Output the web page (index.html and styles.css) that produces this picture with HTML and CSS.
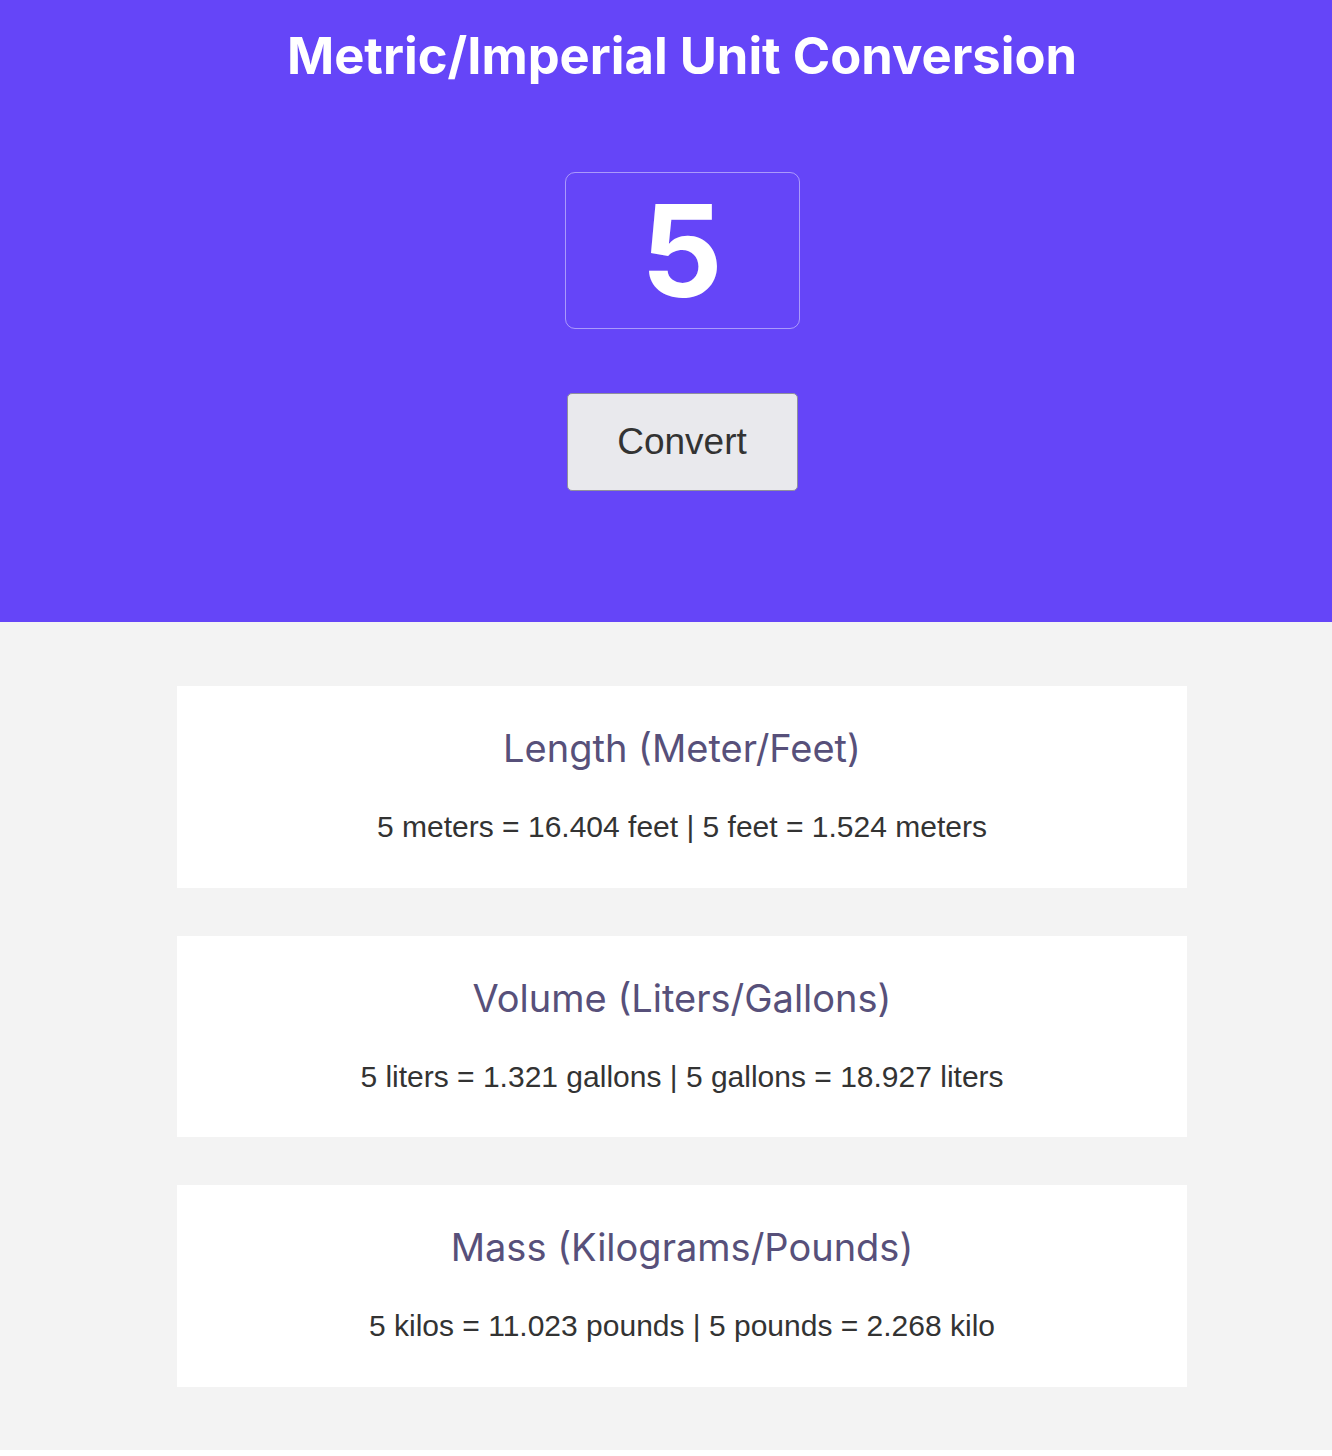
FILE: index.html
```html
<!DOCTYPE html>
<html lang="en">
<head>
<meta charset="utf-8">
<title>Metric/Imperial Unit Conversion</title>
<link rel="stylesheet" href="styles.css">
</head>
<body>
<header class="hero">
  <h1 class="title">Metric/Imperial Unit Conversion</h1>
  <input class="value-input" type="text" value="5">
  <button class="convert-btn">Convert</button>
</header>
<main class="results">
  <section class="card">
    <h2 class="card-title">Length (Meter/Feet)</h2>
    <p class="card-text">5 meters = 16.404 feet | 5 feet = 1.524 meters</p>
  </section>
  <section class="card">
    <h2 class="card-title">Volume (Liters/Gallons)</h2>
    <p class="card-text">5 liters = 1.321 gallons | 5 gallons = 18.927 liters</p>
  </section>
  <section class="card">
    <h2 class="card-title">Mass (Kilograms/Pounds)</h2>
    <p class="card-text">5 kilos = 11.023 pounds | 5 pounds = 2.268 kilo</p>
  </section>
</main>
</body>
</html>
```

FILE: styles.css
```css
* { box-sizing: border-box; }
html { background: #ffffff; }
body {
  margin: 0;
  font-family: Inter, "Noto Sans", sans-serif;
}
.hero {
  background: #6545f8;
  height: 622px;
  display: flex;
  flex-direction: column;
  align-items: center;
  padding-top: 24px;
  padding-left: 32px;
}
.title {
  margin: 0;
  color: #ffffff;
  font-size: 50.7px;
  font-weight: 700;
  line-height: 64px;
}
.value-input {
  margin-top: 84px;
  width: 235px;
  height: 157px;
  border: 1px solid rgba(255, 255, 255, 0.45);
  border-radius: 10px;
  background: transparent;
  color: #ffffff;
  font-family: Inter, sans-serif;
  font-size: 128px;
  font-weight: 700;
  text-align: center;
  padding: 0;
  outline: none;
}
.convert-btn {
  margin-top: 64px;
  width: 231px;
  height: 98px;
  background: #e9e9ed;
  border: 1px solid #8f8f9d;
  border-radius: 5px;
  color: #333333;
  font-family: "Liberation Sans", Arial, sans-serif;
  font-size: 37px;
}
.results {
  background: #f3f3f3;
  padding: 64px 0 63px 32px;
  display: flex;
  flex-direction: column;
  align-items: center;
  gap: 48px;
}
.card {
  background: #ffffff;
  width: 1010px;
  height: 201.7px;
  display: flex;
  flex-direction: column;
  align-items: center;
  padding-top: 39px;
}
.card-title {
  margin: 0;
  color: #57507a;
  font-size: 38px;
  font-weight: 400;
  line-height: 46px;
}
.card-text {
  margin: 41px 0 0;
  color: #333333;
  font-family: "Liberation Sans", Arial, sans-serif;
  font-size: 30px;
  line-height: 1;
}
```
